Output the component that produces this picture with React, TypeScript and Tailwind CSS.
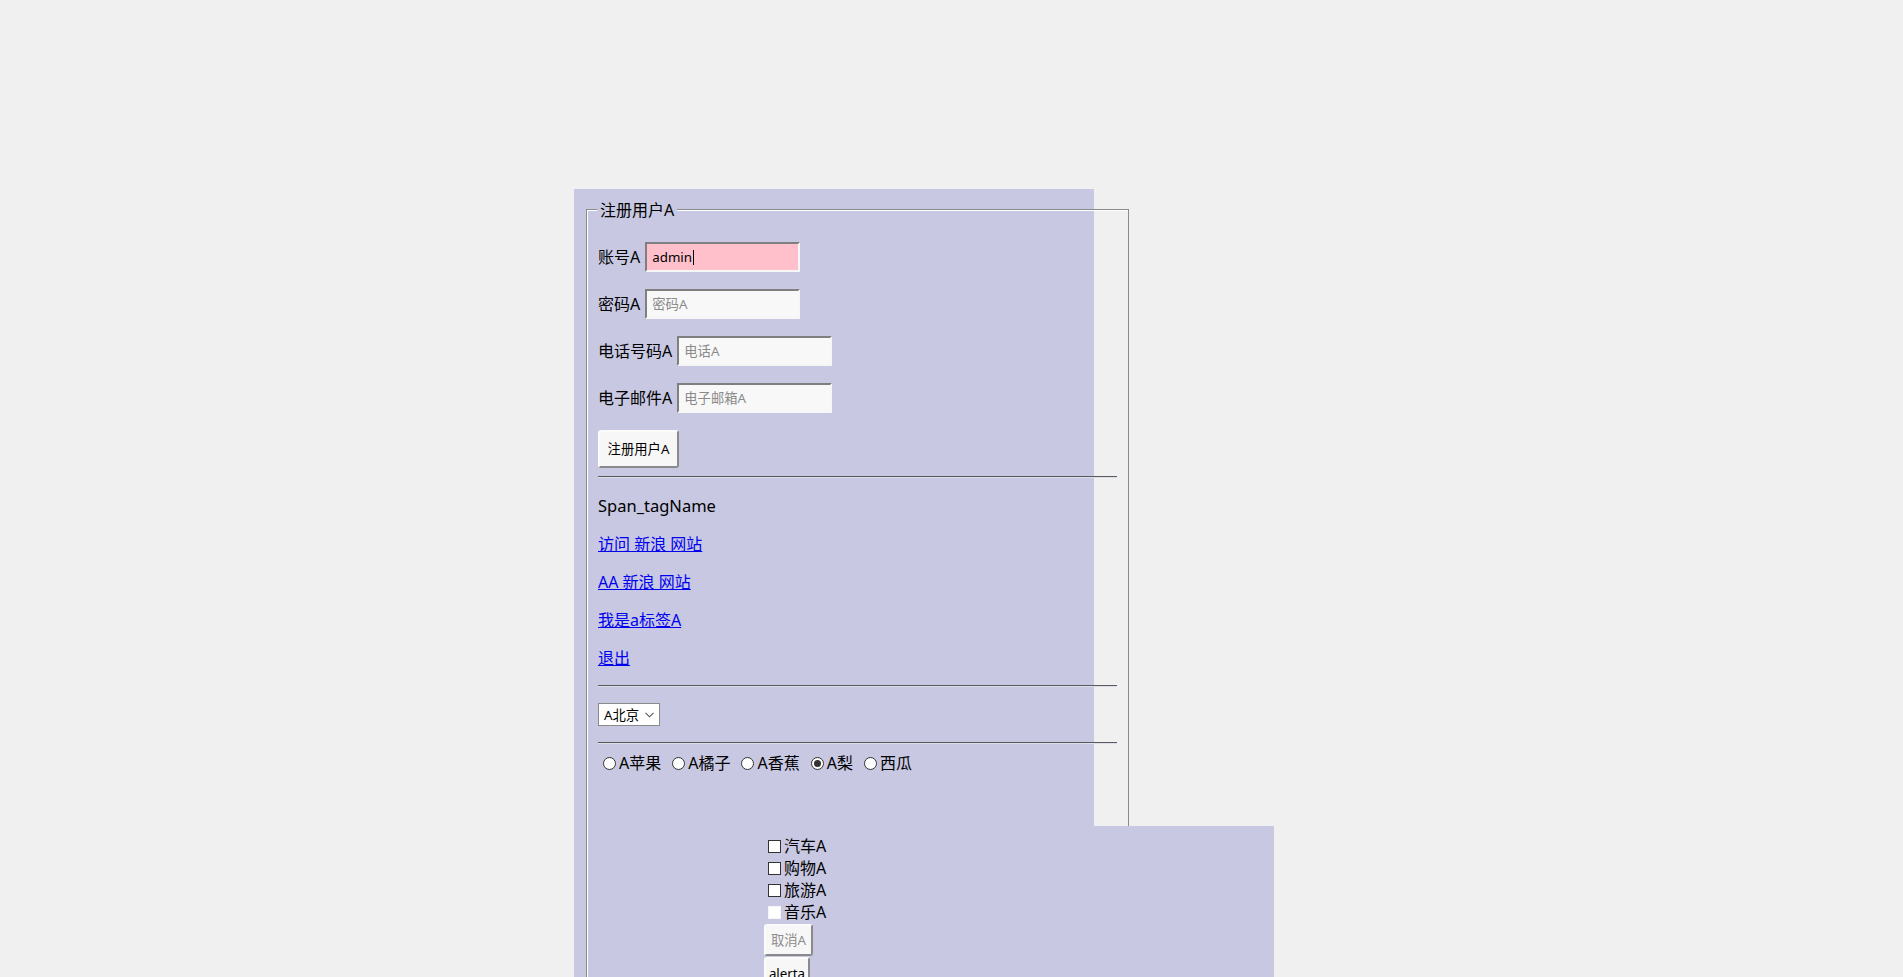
import React from "react";

function TextBox({ value, placeholder, pink }: { value?: string; placeholder?: string; pink?: boolean }) {
  return (
    <div
      className={`flex h-[30px] w-[155px] items-center border-2 border-t-[#7f7f7f] border-l-[#7f7f7f] border-r-[#f6f6f6] border-b-[#f6f6f6] pl-[5px] text-[13.33px] leading-[16px] ${
        pink ? "bg-[#ffc0cb] text-black" : "bg-[#f8f8f8] text-[#8a8a8a]"
      }`}
    >
      {value ? (
        <>
          <span>{value}</span>
          <span className="ml-px inline-block h-[15px] w-px bg-black" />
        </>
      ) : (
        <span>{placeholder}</span>
      )}
    </div>
  );
}

function Row({ label, children }: { label: string; children: React.ReactNode }) {
  return (
    <div className="flex h-[30px] items-center">
      <span className="mr-[5px] text-[16px] leading-[20px] text-black">{label}</span>
      {children}
    </div>
  );
}

function Rule() {
  return <div className="h-[2px] w-full border-t border-t-[#5a5a5a] border-b border-b-[#dedeea]" />;
}

function Radio({ label, checked }: { label: string; checked?: boolean }) {
  return (
    <div className="flex items-center">
      <span className="ml-[5px] mr-[3px] flex h-[13px] w-[13px] items-center justify-center rounded-full border border-[#333333] bg-white">
        {checked && <span className="h-[7px] w-[7px] rounded-full bg-[#333333]" />}
      </span>
      <span className="text-[16px] leading-[20px] text-black">{label}</span>
    </div>
  );
}

function Check({ label, plain }: { label: string; plain?: boolean }) {
  return (
    <div className="flex h-[13px] items-center">
      <span
        className={`ml-[4px] mr-[3px] inline-block h-[13px] w-[13px] bg-white ${
          plain ? "border border-[#f3f3f8]" : "border border-[#333333]"
        }`}
      />
      <span className="text-[16px] leading-[13px] text-black">{label}</span>
    </div>
  );
}

const btn =
  "flex items-center justify-center rounded-[3px] border-2 border-t-[#fbfbfb] border-l-[#fbfbfb] border-r-[#8a8a8a] border-b-[#8a8a8a] bg-[#f7f7f7] text-[13.33px] leading-[16px]";

export default function App() {
  return (
    <div className="h-[977px] w-full overflow-hidden bg-[#f0f0f0] pl-[574px] pt-[189px] font-['Noto_Sans','Noto_Sans_CJK_SC',sans-serif]">
      <div className="h-[900px] w-[520px] bg-[#c8c8e2] pl-[12px] pt-[20px]">
        <div className="relative h-[900px] w-[543px] border border-[#8a8a8a] px-[11px] pt-[32px] shadow-[inset_1px_1px_0_#ffffff]">
          <span className="absolute left-[10px] top-[-9px] bg-[#c8c8e2] px-[3px] text-[16px] leading-[18px] text-black">
            注册用户A
          </span>

          <div className="flex flex-col gap-[17px]">
            <Row label="账号A">
              <TextBox value="admin" pink />
            </Row>
            <Row label="密码A">
              <TextBox placeholder="密码A" />
            </Row>
            <Row label="电话号码A">
              <TextBox placeholder="电话A" />
            </Row>
            <Row label="电子邮件A">
              <TextBox placeholder="电子邮箱A" />
            </Row>
            <button className={`${btn} h-[38px] w-[81px] text-black`}>注册用户A</button>
          </div>

          <div className="mt-[8px]">
            <Rule />
          </div>

          <div className="mt-[9px] h-[38px] text-[16.5px] leading-[38px] text-black">Span_tagName</div>
          <div className="h-[38px] text-[16px] leading-[38px]">
            <a href="#" className="text-[#0000ee] underline">访问 新浪 网站</a>
          </div>
          <div className="h-[38px] text-[16px] leading-[38px]">
            <a href="#" className="text-[#0000ee] underline">AA 新浪 网站</a>
          </div>
          <div className="h-[38px] text-[16px] leading-[38px]">
            <a href="#" className="text-[#0000ee] underline">我是a标签A</a>
          </div>
          <div className="h-[38px] text-[16px] leading-[38px]">
            <a href="#" className="text-[#0000ee] underline">退出</a>
          </div>

          <div className="mt-[8px]">
            <Rule />
          </div>

          <div className="mt-[16px] flex h-[23px] w-[62px] items-center justify-between border border-[#8a8a8a] bg-white pl-[5px] pr-[5px]">
            <span className="text-[13.33px] leading-[16px] text-black">A北京</span>
            <svg width="9" height="6" viewBox="0 0 9 6" fill="none">
              <path d="M0.5 0.8 L4.5 4.8 L8.5 0.8" stroke="#555555" strokeWidth="1.1" />
            </svg>
          </div>

          <div className="mt-[16px]">
            <Rule />
          </div>

          <div className="mt-[9px] flex h-[20px] items-center gap-[6px]">
            <Radio label="A苹果" />
            <Radio label="A橘子" />
            <Radio label="A香蕉" />
            <Radio label="A梨" checked />
            <Radio label="西瓜" />
          </div>

          <div className="relative z-10 mr-[-157px] mt-[53px] h-[300px] bg-[#c8c8e2] pl-[166px] pt-[14px]">
            <div className="flex flex-col gap-[9px]">
              <Check label="汽车A" />
              <Check label="购物A" />
              <Check label="旅游A" />
              <Check label="音乐A" plain />
            </div>
            <button className={`${btn} mt-[5px] h-[32px] w-[49px] text-[#8d8d8d]`}>取消A</button>
            <button className={`${btn} mt-[1px] h-[32px] w-[46px] text-black`}>alerta</button>
          </div>
        </div>
      </div>
    </div>
  );
}
